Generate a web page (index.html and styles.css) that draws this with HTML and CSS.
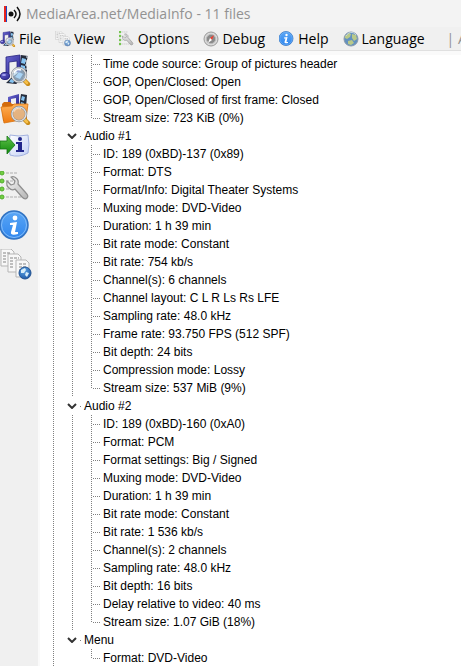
FILE: index.html
```html
<!DOCTYPE html>
<html lang="en">
<head>
  <meta charset="UTF-8">
  <meta name="viewport" content="width=device-width, initial-scale=1">
  <title>MediaArea.net/MediaInfo - 11 files</title>
  <link rel="stylesheet" href="styles.css">
</head>
<body>
  <!-- Shared icons -->
  <svg class="sprite" aria-hidden="true">
    <defs>
      <linearGradient id="gBlue" x1="0" y1="0" x2="0" y2="1">
        <stop offset="0" stop-color="#5aa6f5"/>
        <stop offset="1" stop-color="#2f86ee"/>
      </linearGradient>
      <linearGradient id="gOrange" x1="0" y1="0" x2="0" y2="1">
        <stop offset="0" stop-color="#ffb056"/>
        <stop offset="1" stop-color="#ee7a10"/>
      </linearGradient>
      <linearGradient id="gGreen" x1="0" y1="0" x2="0" y2="1">
        <stop offset="0" stop-color="#5fc04a"/>
        <stop offset="1" stop-color="#0f8a0c"/>
      </linearGradient>
      <linearGradient id="gNote" x1="0" y1="0" x2="1" y2="1">
        <stop offset="0" stop-color="#ffffff"/>
        <stop offset="1" stop-color="#c3d0f5"/>
      </linearGradient>
      <linearGradient id="gPurple" x1="0" y1="0" x2="1" y2="1">
        <stop offset="0" stop-color="#6a66d0"/>
        <stop offset="1" stop-color="#2b2890"/>
      </linearGradient>
      <radialGradient id="gGlobe" cx=".4" cy=".3" r=".8">
        <stop offset="0" stop-color="#5fa6e6"/>
        <stop offset="1" stop-color="#17509f"/>
      </radialGradient>
      <linearGradient id="gSteel" x1="0" y1="0" x2="1" y2="1">
        <stop offset="0" stop-color="#f6f6f6"/>
        <stop offset="1" stop-color="#b4b4b4"/>
      </linearGradient>
    </defs>
    <symbol id="lens" viewBox="0 0 32 32">
      <path d="M25 27l3 3" stroke="#c98d1c" stroke-width="4.500" stroke-linecap="round"/>
      <path d="M25 27l2 2" stroke="#f6c04a" stroke-width="2.500" stroke-linecap="round"/>
      <circle cx="19" cy="21" r="7" fill="#bcdcf4" fill-opacity=".65" stroke="#8a8f96" stroke-width="2.400"/>
      <circle cx="19" cy="21" r="7" fill="none" stroke="#e2e4e6" stroke-width="1.200"/>
      <path d="M14 19c1-3 4-4 7-3" stroke="#fff" stroke-width="1.500" fill="none"/>
    </symbol>
    <symbol id="media" viewBox="0 0 32 32">
      <path d="M21 1l7 1-2 7 1 8-4 8-7 5-10-1 5-5 8-6z" fill="#252c3c"/>
      <path d="M22 4l4 1-1 5-4-1zM21 11l4 1v5l-5-1zM19 18l4 2-3 5-5-2zM11 25l4 1-2 3-4-1z" fill="#86c4f2"/>
      <path d="M27 2v2M26 6v2M26 10v2M26 14v2" stroke="#e6eef6" stroke-width="1"/>
      <path d="M6 3l14-2v17h-3V7l-8 1v13H6z" fill="url(#gPurple)" stroke="#27247e" stroke-width=".8"/>
      <ellipse cx="5" cy="22" rx="4.500" ry="3.500" fill="url(#gPurple)" stroke="#27247e"/>
      <ellipse cx="4" cy="21" rx="2" ry="1" fill="#aaa8f0"/>
      <use href="#lens"/>
    </symbol>
    <symbol id="folder" viewBox="0 0 32 32">
      <path d="M8 4l11-3v12h-3V5l-5 1v7H8z" fill="url(#gPurple)"/>
      <path d="M21 1l6 1-1 13h-7z" fill="#252c3c"/>
      <path d="M22 3l3 1-1 4-3-1zM21 9l3 1v4h-4z" fill="#86c4f2"/>
      <path d="M2 11l2-2h6l2 2h15v15l-2 2H3z" fill="#d36b0c"/>
      <path d="M1 14l11-1 2-2h14l-2 15-22 4z" fill="url(#gOrange)" stroke="#d8720e" stroke-width=".8"/>
      <use href="#lens"/>
      <circle cx="19" cy="21" r="6" fill="#f2a860" fill-opacity=".6"/>
    </symbol>
    <symbol id="export" viewBox="0 0 32 32">
      <path d="M10 3q9 2 18 0 2 10 0 18-9 5-18 2-2-10 0-20z" fill="url(#gNote)" stroke="#a2b1df"/>
      <circle cx="20" cy="7" r="2" fill="#22268a"/>
      <path d="M16 10h6v8h2v2h-8v-2h2v-6h-2z" fill="#22268a"/>
      <path d="M0 9h7V4l8 9-8 9v-5H0z" fill="url(#gGreen)" stroke="#147312" stroke-width=".8"/>
    </symbol>
    <symbol id="tools" viewBox="0 0 32 32">
      <path d="M6 2h11M6 10h11M6 18h14M6 26h18" stroke="#cfcfcf" stroke-width="2" stroke-dasharray="3 1"/>
      <g fill="#73cf43" stroke="#50ad2b">
        <circle cx="2" cy="2" r="2"/><circle cx="2" cy="10" r="2"/>
        <circle cx="2" cy="18" r="2"/><circle cx="2" cy="26" r="2"/>
      </g>
      <path d="M11 6l4 4-1 3-3 1-4-4q-1 5 2 7 3 3 6 1l7 8q3 3 5 1t-1-5l-8-9q1-4-2-6-2-2-5-1z" fill="url(#gSteel)" stroke="#8e8e8e" stroke-width="1.200" stroke-linejoin="round"/>
    </symbol>
    <symbol id="info" viewBox="0 0 32 32">
      <circle cx="14" cy="15" r="14" fill="url(#gBlue)" stroke="#3273c2" stroke-width="1.500"/>
      <circle cx="14" cy="15" r="12.500" fill="none" stroke="#83bcf8"/>
      <circle cx="15" cy="8" r="2.400" fill="#fff"/>
      <path d="M10 13l7-1-2 10h3v2q-8 2-7-2l2-7h-3z" fill="#fff"/>
    </symbol>
    <symbol id="sheets" viewBox="0 0 32 32">
      <g fill="#f8f8f8" stroke="#b5b5b5">
        <path d="M1 0h10l3 3v14H1z"/><path d="M8 5h10l3 3v15H8z"/><path d="M16 11h10l3 3v14H16z"/>
      </g>
      <path d="M3 4h8M3 7h4M3 10h4M3 13h4M10 9h9M10 12h4M10 15h4M10 18h4M19 15h7M19 18h7M19 21h3" stroke="#858585" stroke-dasharray="3 1"/>
      <circle cx="25" cy="24" r="6" fill="url(#gGlobe)" stroke="#235391"/>
      <path d="M21 21l4-2 1 2-2 3h-3zM26 23l3 1-2 4-2-2z" fill="#d8edf9"/>
    </symbol>
    <symbol id="gauge" viewBox="0 0 16 16">
      <circle cx="8" cy="8" r="7" fill="#d9d9d9" stroke="#9a9a9a"/>
      <circle cx="8" cy="8" r="4.600" fill="#8a8a8a" stroke="#b9b9b9"/>
      <path d="M11 4L9 9 7 7z" fill="#ef4031"/>
      <path d="M5 12l2-5 2 2z" fill="#fff"/>
    </symbol>
    <symbol id="globe" viewBox="0 0 16 16">
      <circle cx="8" cy="8" r="7" fill="#6391bf" stroke="#8b9aaa"/>
      <path d="M2 5l4-3 2 1-1 3-3 2-2-1zM9 3l4 1 1 4-3 2-2-3zM5 10l4-1 2 3-3 2-3-1z" fill="#b9c989"/>
      <path d="M3 5c2-4 7-5 10-1" stroke="#dcebf5" stroke-opacity=".7" fill="none"/>
    </symbol>
  </svg>

  <header class="titlebar">
    <svg class="logo" viewBox="0 0 18 18" aria-hidden="true">
      <path d="M1 1v16" stroke="#e8231c" stroke-width="2"/>
      <path d="M2.500 1v16" stroke="#1c49c2" stroke-width="1"/>
      <circle cx="7" cy="9" r="2.500" fill="#111"/>
      <path d="M10 5q4 4 0 8M13 2q6 7 0 14" fill="none" stroke="#111" stroke-width="1.500"/>
    </svg>
    <h1>MediaArea.net/MediaInfo - 11 files</h1>
  </header>

  <nav class="menubar">
    <button type="button"><svg><use href="#media"/></svg>File</button>
    <button type="button"><svg class="faded"><use href="#sheets"/></svg>View</button>
    <button type="button"><svg><use href="#tools"/></svg>Options</button>
    <button type="button"><svg><use href="#gauge"/></svg>Debug</button>
    <button type="button"><svg><use href="#info"/></svg>Help</button>
    <button type="button"><svg><use href="#globe"/></svg>Language</button>
    <span class="more">| A</span>
  </nav>

  <div class="workspace">
    <aside class="toolbar">
      <button type="button" aria-label="Open file"><svg><use href="#media"/></svg></button>
      <button type="button" aria-label="Open folder"><svg><use href="#folder"/></svg></button>
      <button type="button" aria-label="Export"><svg><use href="#export"/></svg></button>
      <button type="button" aria-label="Options"><svg><use href="#tools"/></svg></button>
      <button type="button" aria-label="About"><svg><use href="#info"/></svg></button>
      <button type="button" aria-label="View"><svg><use href="#sheets"/></svg></button>
    </aside>

    <main class="tree">
      <div class="branch">
        <ul class="leaves">
          <li>Time code source: Group of pictures header</li>
          <li>GOP, Open/Closed: Open</li>
          <li>GOP, Open/Closed of first frame: Closed</li>
          <li>Stream size: 723 KiB (0%)</li>
        </ul>
      </div>
      <details class="branch" open>
        <summary><svg viewBox="0 0 10 6"><path d="M1 1l4 4 4-4"/></svg>Audio #1</summary>
        <ul class="leaves">
          <li>ID: 189 (0xBD)-137 (0x89)</li>
          <li>Format: DTS</li>
          <li>Format/Info: Digital Theater Systems</li>
          <li>Muxing mode: DVD-Video</li>
          <li>Duration: 1 h 39 min</li>
          <li>Bit rate mode: Constant</li>
          <li>Bit rate: 754 kb/s</li>
          <li>Channel(s): 6 channels</li>
          <li>Channel layout: C L R Ls Rs LFE</li>
          <li>Sampling rate: 48.0 kHz</li>
          <li>Frame rate: 93.750 FPS (512 SPF)</li>
          <li>Bit depth: 24 bits</li>
          <li>Compression mode: Lossy</li>
          <li>Stream size: 537 MiB (9%)</li>
        </ul>
      </details>
      <details class="branch" open>
        <summary><svg viewBox="0 0 10 6"><path d="M1 1l4 4 4-4"/></svg>Audio #2</summary>
        <ul class="leaves">
          <li>ID: 189 (0xBD)-160 (0xA0)</li>
          <li>Format: PCM</li>
          <li>Format settings: Big / Signed</li>
          <li>Muxing mode: DVD-Video</li>
          <li>Duration: 1 h 39 min</li>
          <li>Bit rate mode: Constant</li>
          <li>Bit rate: 1 536 kb/s</li>
          <li>Channel(s): 2 channels</li>
          <li>Sampling rate: 48.0 kHz</li>
          <li>Bit depth: 16 bits</li>
          <li>Delay relative to video: 40 ms</li>
          <li>Stream size: 1.07 GiB (18%)</li>
        </ul>
      </details>
      <details class="branch" open>
        <summary><svg viewBox="0 0 10 6"><path d="M1 1l4 4 4-4"/></svg>Menu</summary>
        <ul class="leaves">
          <li>Format: DVD-Video</li>
        </ul>
      </details>
    </main>
  </div>
</body>
</html>
```
FILE: styles.css
```css
:root {
  --chrome: #f0f0f0;
  --dot: #808080;
  --dots-v: repeating-linear-gradient(to bottom, var(--dot) 0 1px, transparent 1px 2px);
  --dots-h: repeating-linear-gradient(to right, var(--dot) 0 1px, transparent 1px 2px);
  --ui-font: "Open Sans", "Noto Sans", sans-serif;
}

* {
  box-sizing: border-box;
}

body {
  margin: 0;
  height: 100vh;
  display: flex;
  flex-direction: column;
  overflow: hidden;
  background: var(--chrome);
  color: #000;
  font-family: var(--ui-font);
}

button {
  border: 0;
  padding: 0;
  background: none;
  color: inherit;
  font: inherit;
}

.sprite {
  position: absolute;
  width: 0;
  height: 0;
}

/* Title bar */
.titlebar {
  display: flex;
  align-items: center;
  gap: 4px;
  height: 27px;
  padding: 0 4px;
  background: #f3f3f3;
}
.titlebar h1 {
  margin: 0;
  color: #929292;
  font-size: 14px;
  font-weight: 400;
  line-height: 20px;
  white-space: nowrap;
}
.logo {
  flex: none;
  width: 18px;
  height: 18px;
}

/* Menu */
.menubar {
  display: flex;
  align-items: center;
  gap: 14px;
  height: 23px;
  white-space: nowrap;
  font-size: 14px;
  line-height: 20px;
}
.menubar button {
  display: flex;
  align-items: center;
  gap: 3px;
}
.menubar svg {
  flex: none;
  width: 16px;
  height: 16px;
}
.menubar .faded {
  opacity: 0.7;
}
.more {
  margin-left: 8px;
  color: #929292;
}

/* Main area: icons on the left, tree on the right */
.workspace {
  flex: 1;
  display: flex;
  min-height: 0;
}
.toolbar {
  flex: none;
  display: flex;
  flex-direction: column;
  gap: 7px;
  width: 38px;
  padding-top: 4px;
}
.toolbar button,
.toolbar svg {
  display: block;
  width: 32px;
  height: 32px;
}

/* Tree */
.tree {
  flex: 1;
  min-width: 0;
  padding: 4px 0 0 15px;
  border-top: 1px solid #e0e0e0;
  background: var(--dots-v) 15px 4px / 1px 100% no-repeat, #fff;
  box-shadow: inset 2px 4px #fafafa;
  font: 12px/18px "Liberation Sans", Arial, sans-serif;
  white-space: nowrap;
}
.branch {
  padding-left: 19px;
  background: var(--dots-v) 19px 18px / 1px 100% no-repeat;
}
.branch:first-child {
  background-position: 19px 0;
}
.branch:last-child {
  background: none;
}
.branch summary {
  display: flex;
  align-items: center;
  gap: 7px;
  margin-left: -5px;
  list-style: none;
  background: linear-gradient(var(--dot), var(--dot)) 13px 9px / 1px 1px no-repeat;
}
.branch summary svg {
  width: 10px;
  height: 6px;
  fill: none;
  stroke: #333;
  stroke-width: 2;
}
.leaves {
  margin: 0 0 0 19px;
  padding: 0;
  list-style: none;
}
.leaves li {
  height: 18px;
  padding-left: 12px;
  background:
    var(--dots-v) 0 0 / 1px 18px no-repeat,
    var(--dots-h) 2px 9px / 8px 1px no-repeat;
}
.leaves li:last-child {
  background:
    var(--dots-v) 0 0 / 1px 10px no-repeat,
    var(--dots-h) 2px 9px / 8px 1px no-repeat;
}
```
